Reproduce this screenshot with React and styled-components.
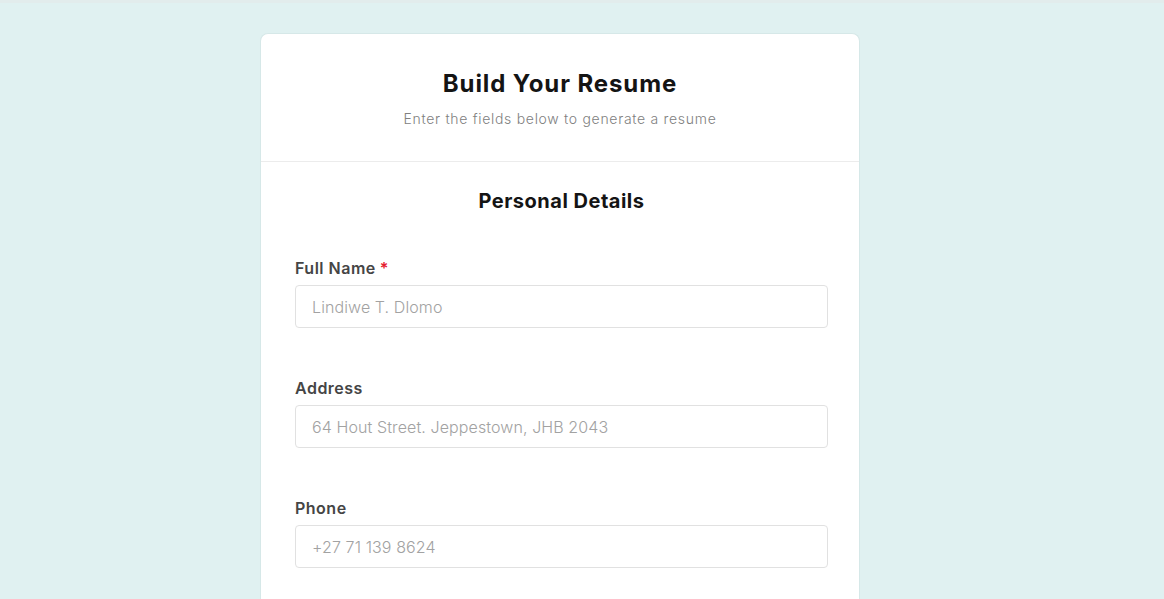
import React from 'react';
import styled, { createGlobalStyle } from 'styled-components';

const GlobalStyle = createGlobalStyle`
  body {
    margin: 0;
    background: #e0f1f1;
    font-family: Inter, "Open Sans", sans-serif;
  }
  * {
    box-sizing: border-box;
  }
`

const TopStrip = styled.div`
  height: 3px;
  background: #e2ecec;
`

const Page = styled.div`
  display: flex;
  justify-content: center;
  width: 1120px;
  padding-top: 30px;
  min-height: 596px;
`

const Card = styled.div`
  width: 600px;
  background: #fff;
  border: 1px solid #d6e8e8;
  border-bottom: none;
  border-radius: 8px 8px 0 0;
`

const Header = styled.div`
  display: flex;
  flex-direction: column;
  align-items: center;
  padding: 33px 0 32px;
  border-bottom: 1px solid #ececec;
`

const Title = styled.h1`
  margin: 0;
  font-size: 24px;
  line-height: 33px;
  font-weight: 700;
  letter-spacing: 0.9px;
  color: #141414;
`

const Subtitle = styled.p`
  margin: 8px 0 0;
  font-size: 14px;
  line-height: 21px;
  font-weight: 300;
  letter-spacing: 0.7px;
  color: #808080;
`

const Body = styled.div`
  padding: 25px 31px 0 34px;
`

const SectionTitle = styled.h2`
  margin: 0 0 42px;
  text-align: center;
  font-size: 20px;
  line-height: 28px;
  font-weight: 700;
  letter-spacing: 0.5px;
  color: #141414;
`

const Field = styled.div`
  display: flex;
  flex-direction: column;
  margin-bottom: 49px;
`

const Label = styled.label`
  font-size: 16px;
  line-height: 22px;
  font-weight: 600;
  letter-spacing: 0.5px;
  color: #454545;
  margin-bottom: 6px;
`

const Required = styled.span`
  color: #e5202e;
  margin-left: 4px;
`

const Input = styled.input`
  height: 43px;
  width: 100%;
  padding: 0 16px;
  border: 1px solid #e1e1e1;
  border-radius: 4px;
  font-family: inherit;
  font-size: 16px;
  font-weight: 300;
  letter-spacing: 0.1px;
  color: #333;
  outline: none;
  &::placeholder {
    color: #a2a2a2;
  }
`

const fields = [
  { id: 'name', label: 'Full Name', placeholder: 'Lindiwe T. Dlomo', required: true },
  { id: 'address', label: 'Address', placeholder: '64 Hout Street. Jeppestown, JHB 2043' },
  { id: 'phone', label: 'Phone', placeholder: '+27 71 139 8624' },
]

const App = () => {
  return (
    <>
      <GlobalStyle />
      <TopStrip />
      <Page>
        <Card>
          <Header>
            <Title>Build Your Resume</Title>
            <Subtitle>Enter the fields below to generate a resume</Subtitle>
          </Header>
          <Body>
            <SectionTitle>Personal Details</SectionTitle>
            {fields.map(field => (
              <Field key={field.id}>
                <Label htmlFor={field.id}>
                  {field.label}
                  {field.required && <Required>*</Required>}
                </Label>
                <Input id={field.id} placeholder={field.placeholder} />
              </Field>
            ))}
          </Body>
        </Card>
      </Page>
    </>
  )
}

export default App
